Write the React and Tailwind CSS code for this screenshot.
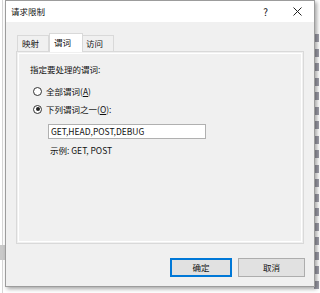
const font = { fontFamily: '"Noto Sans CJK SC", "Microsoft YaHei", sans-serif' };

function Radio({ checked, children }) {
  return (
    <div className="flex h-[18px] items-center gap-[4px] pl-[3px]">
      <span className="flex h-[9px] w-[9px] items-center justify-center rounded-full border border-[#333] bg-white">
        {checked && <span className="h-[4px] w-[4px] rounded-full bg-[#222]" />}
      </span>
      <span>{children}</span>
    </div>
  );
}

export default function App() {
  return (
    <div
      className="relative h-[293px] w-[320px] overflow-hidden bg-white text-[8.5px] leading-none text-[#111]"
      style={font}
    >
      {/* background window fragments */}
      <div className="absolute left-[2px] top-0 h-[293px] w-[1px] bg-[#d6d6d6]" />
      <div className="absolute left-0 top-[245px] h-[15px] w-[5px] bg-[#c9c9c9]" />
      <div className="absolute right-0 top-0 flex w-[6px] flex-col gap-[6.5px] pt-[34px]">
        {Array.from({ length: 18 }).map((_, i) => (
          <div key={i} className="h-[8px] w-[5px] bg-[#5d5d70] opacity-60" />
        ))}
      </div>

      {/* dialog */}
      <div className="relative ml-[5px] flex h-[287px] w-[310px] flex-col border border-[#9c9c9c] bg-[#f0f0f0] shadow-[2px_2px_4px_rgba(0,0,0,0.35)]">
        <div className="flex h-[21px] items-center bg-white pl-[5px] pr-[10px]">
          <span>请求限制</span>
          <span className="ml-auto mr-[25px] text-[10px]">?</span>
          <svg width="9" height="9" viewBox="0 0 9 9" className="mr-[2px]">
            <path d="M0.5 0.5L8.5 8.5M8.5 0.5L0.5 8.5" stroke="#222" strokeWidth="1" />
          </svg>
        </div>

        <div className="flex flex-1 flex-col px-[10px] pt-[11px]">
          {/* tabs */}
          <div className="relative z-10 flex h-[18px] items-end pl-[1px]">
            <div className="flex h-[16px] w-[32px] items-center border border-b-0 border-[#d9d9d9] bg-[#f0f0f0] pl-[4px]">映射</div>
            <div className="-mb-[1px] flex h-[19px] w-[34px] items-center border border-b-0 border-[#d9d9d9] bg-white pb-[2px] pl-[4px]">谓词</div>
            <div className="flex h-[16px] w-[31px] items-center border border-b-0 border-l-0 border-[#d9d9d9] bg-[#f0f0f0] pl-[3px]">访问</div>
          </div>
          <div className="h-[193px] w-[288px] border border-[#d9d9d9] bg-[#f0f0f0] p-[1px]">
            <div className="h-full w-full border border-white pl-[11px] pt-[9px]">
              <div className="flex h-[12px] items-center">指定要处理的谓词:</div>
              <div className="mt-[7px] flex flex-col">
                <Radio>全部谓词(<span className="underline">A</span>)</Radio>
                <Radio checked>下列谓词之一(<span className="underline">O</span>):</Radio>
              </div>
              <div className="ml-[18px] mt-[6px] flex h-[15px] w-[158px] items-center border border-[#b0b0b0] bg-white pl-[2px]">
                GET,HEAD,POST,DEBUG
              </div>
              <div className="ml-[20px] mt-[5px] flex h-[12px] items-center">示例: GET, POST</div>
            </div>
          </div>

          <div className="mt-[14px] flex justify-end gap-[6px]">
            <button className="h-[19px] w-[62px] border-2 border-[#0078d7] bg-[#e1e1e1] leading-none">确定</button>
            <button className="-mr-[1px] h-[19px] w-[67px] border border-[#adadad] bg-[#e1e1e1] leading-none">取消</button>
          </div>
        </div>
      </div>
    </div>
  );
}
